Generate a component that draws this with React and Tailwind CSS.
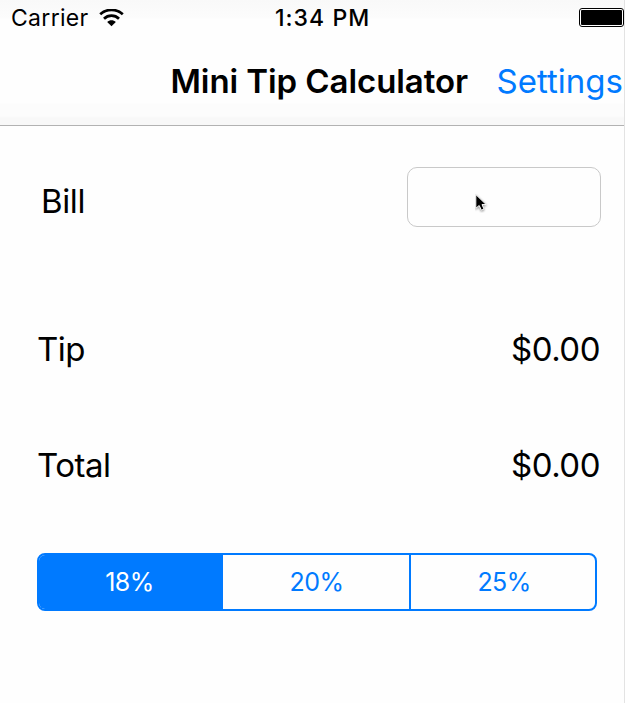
function WifiIcon() {
  return (
    <svg className="ml-[10px] h-[18px] w-[25px]" viewBox="0 0 25 18" fill="none">
      <path d="M1.2 5.3C7.6 -.6 17.4 -.6 23.8 5.3" stroke="#000" strokeWidth="2.7" />
      <path d="M5 9.7C9.2 5.6 15.8 5.6 20 9.7" stroke="#000" strokeWidth="2.7" />
      <path d="M8.2 13C10.5 10.7 14.5 10.7 16.8 13L12.5 17.2Z" fill="#000" />
    </svg>
  );
}

function Battery() {
  return (
    <div className="ml-auto h-[19px] w-[45px] shrink-0 rounded-[3px] border border-black bg-white p-px">
      <div className="h-full w-full rounded-[1px] bg-black" />
    </div>
  );
}

function Pointer() {
  return (
    <svg className="absolute left-[67px] top-[25px] h-[20px] w-[14px]" viewBox="0 0 14 20">
      <path
        d="M.8 1.5V15.3L4.2 12.5L6.4 17.2L9 16L7 11.6H11.2Z"
        fill="#000"
        stroke="#fff"
        strokeWidth="1"
        style={{ filter: "drop-shadow(0 1px 1px rgba(0,0,0,.45))" }}
      />
    </svg>
  );
}

function Amount({ label, value, className }) {
  return (
    <div className={`flex h-[60px] items-center justify-between pl-[37px] pr-[24px] text-[33px] ${className}`}>
      <span className="tracking-[-0.5px]">{label}</span>
      <span className="tracking-[-0.5px]">{value}</span>
    </div>
  );
}

export default function App() {
  return (
    <div className="h-[703px] w-[625px] overflow-hidden border-r border-[#e3e3e3] bg-[#fefefe] font-['Inter',sans-serif] leading-none whitespace-nowrap text-black">
      <header className="h-[126px] border-b border-[#b2b2b2] bg-[linear-gradient(#f9f9f9_0px,#fcfcfc_18px,#fefefe_19px,#fefefe_103px,#fcfcfc_104px,#fcfcfc_116px,#f8f8f8_118px,#f8f8f8_125px)]">
        <div className="flex h-[35px] items-center pl-[11px]">
          <div className="flex w-[264px] items-center pt-px text-[23px]">
            <span className="tracking-[0.3px]">Carrier</span>
            <WifiIcon />
          </div>
          <span className="pt-px text-[23px] font-medium tracking-[1.05px]">1:34 PM</span>
          <Battery />
        </div>
        <div className="flex h-[92px] items-center pl-[170.5px] text-[33px]">
          <h1 className="w-[326px] font-semibold tracking-[-0.08px]">Mini Tip Calculator</h1>
          <button className="text-[#007aff]">Settings</button>
        </div>
      </header>
      <main className="pt-[41px]">
        <div className="flex h-[60px] items-center justify-between pl-[41px] pr-[23px]">
          <span className="pt-[8px] text-[33px] tracking-[-0.4px]">Bill</span>
          <div className="relative h-[60px] w-[194px] rounded-[10px] border border-[#c9c9c9]">
            <Pointer />
          </div>
        </div>
        <Amount label="Tip" value="$0.00" className="mt-[92px]" />
        <Amount label="Total" value="$0.00" className="mt-[56px]" />
        <div className="ml-[37px] mt-[58px] grid h-[58px] w-[560px] grid-cols-[184px_188px_184px] overflow-hidden rounded-[8px] border-2 border-[#007aff] text-[25px] tracking-[-0.6px] text-[#007aff]">
          <button className="bg-[#007aff] pr-[3px] text-white">18%</button>
          <button className="border-r-2 border-[#007aff] pl-[1px]">20%</button>
          <button className="pl-[2px]">25%</button>
        </div>
      </main>
    </div>
  );
}
